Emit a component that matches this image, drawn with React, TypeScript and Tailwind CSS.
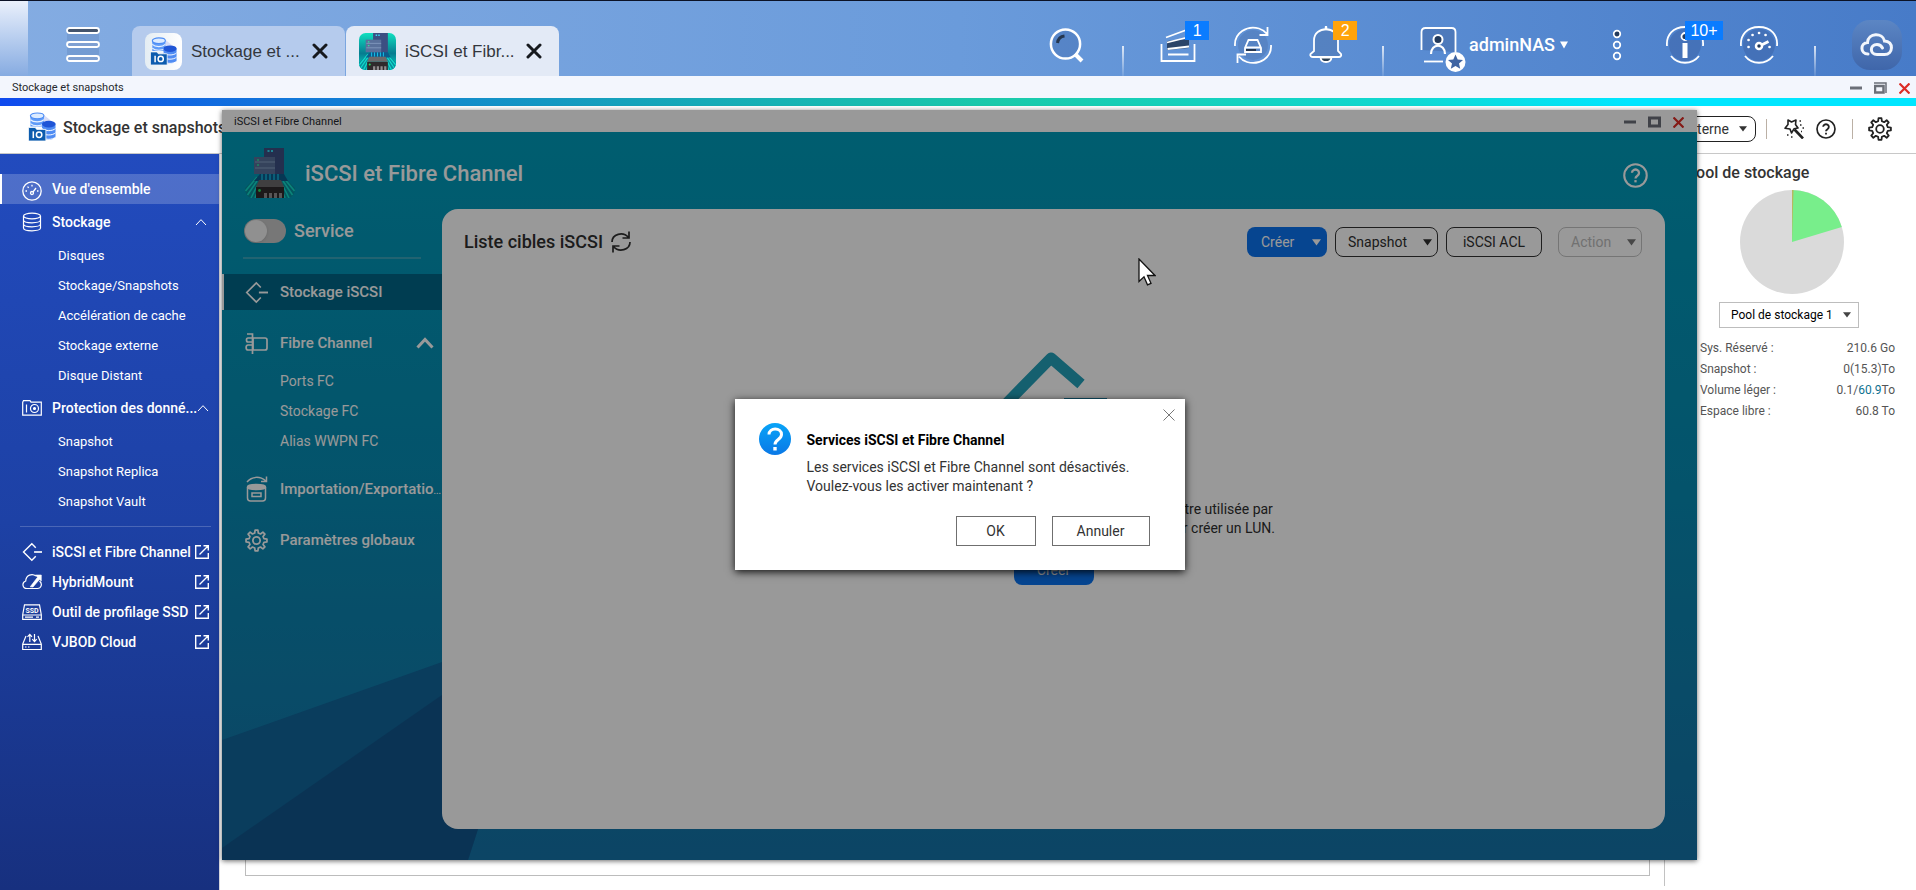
import type { ReactNode } from "react";
import { clsx } from "clsx";

// ── Navigation data ────────────────────────────────────────────────────────

const storageItems = ["Disques", "Stockage/Snapshots", "Accélération de cache", "Stockage externe", "Disque Distant"];
const protectionItems = ["Snapshot", "Snapshot Replica", "Snapshot Vault"];

const shortcuts = [
  { label: "iSCSI et Fibre Channel", icon: <TargetIcon className="size-5 shrink-0" /> },
  { label: "HybridMount", icon: <HybridIcon /> },
  { label: "Outil de profilage SSD", icon: <SsdIcon /> },
  { label: "VJBOD Cloud", icon: <VjbodIcon /> },
];

const poolRows: { label: string; value: ReactNode }[] = [
  { label: "Sys. Réservé :", value: "210.6 Go" },
  { label: "Snapshot :", value: "0(15.3)To" },
  { label: "Volume léger :", value: <>0.1/<a href="#volume" className="text-[#0f7291]">60.9</a>To</> },
  { label: "Espace libre :", value: "60.8 To" },
];

// ── Icons ──────────────────────────────────────────────────────────────────

function gearPath(teeth: number, outer: number, inner: number) {
  const pts: string[] = [];
  const step = (Math.PI * 2) / teeth;
  for (let i = 0; i < teeth; i++) {
    const a = i * step - Math.PI / 2;
    [[-0.3, inner], [-0.17, outer], [0.17, outer], [0.3, inner]].forEach(([k, r]) => {
      pts.push(`${(12 + r * Math.cos(a + k * step)).toFixed(2)} ${(12 + r * Math.sin(a + k * step)).toFixed(2)}`);
    });
  }
  return `M${pts.join("L")}Z`;
}

function GearIcon({ className }: { className?: string }) {
  return (
    <svg viewBox="0 0 24 24" fill="none" stroke="currentColor" strokeWidth="1.8" strokeLinejoin="round" className={className}>
      <path d={gearPath(8, 11, 8)} />
      <circle cx="12" cy="12" r="3.8" />
    </svg>
  );
}

function HelpIcon({ className }: { className?: string }) {
  return (
    <svg viewBox="0 0 24 24" fill="none" stroke="currentColor" strokeWidth="2" className={className}>
      <circle cx="12" cy="12" r="10.8" />
      <path d="M8.6 9.4a3.4 3.2 0 1 1 5.2 2.8c-1.2.8-1.8 1.3-1.8 2.6" strokeWidth="2.2" />
      <path d="M12 16.4v2.2" strokeWidth="2.2" />
    </svg>
  );
}

function Caret({ className }: { className?: string }) {
  return (
    <svg viewBox="0 0 8 6" fill="currentColor" preserveAspectRatio="none" className={clsx("shrink-0", className)}>
      <path d="M0 .3h8L4 5.6z" />
    </svg>
  );
}

function TargetIcon({ className }: { className?: string }) {
  return (
    <svg viewBox="0 0 24 24" fill="none" stroke="currentColor" strokeWidth="1.7" className={className}>
      <path d="M16.5 6.8 11.8 2 1.8 12l10 10 4.7-4.8" />
      <path d="M14.5 12H24" strokeWidth="2" />
    </svg>
  );
}

function GaugeIcon() {
  return (
    <svg viewBox="0 0 20 20" fill="none" stroke="currentColor" strokeWidth="1.3" className="mt-1 size-5 shrink-0">
      <circle cx="10" cy="10" r="9.2" />
      <circle cx="10" cy="12" r="1.5" />
      <path d="m11 11 3-4M3.5 10H5M15 10h1.5M10 3.7v1.8M5.5 5.6l1.2 1.2" />
    </svg>
  );
}

function DisksIcon() {
  return (
    <svg viewBox="0 0 20 20" fill="none" stroke="currentColor" strokeWidth="1.2" className="size-5 shrink-0">
      <ellipse cx="10" cy="4" rx="8.5" ry="2.8" />
      <path d="M1.5 4v12c0 1.6 3.8 2.8 8.5 2.8s8.5-1.2 8.5-2.8V4M1.5 8c0 1.6 3.8 2.8 8.5 2.8S18.5 9.6 18.5 8M1.5 12c0 1.6 3.8 2.8 8.5 2.8s8.5-1.2 8.5-2.8" />
    </svg>
  );
}

function CameraIcon() {
  return (
    <svg viewBox="0 0 20 20" fill="none" stroke="currentColor" strokeWidth="1.2" className="size-5 shrink-0">
      <path d="M.7 4.3 1.5 2.6H8l1 1.5h10.3v13H.7zM4.5 6.5v8" />
      <circle cx="12.5" cy="10.5" r="4" />
      <circle cx="12.5" cy="10.5" r="1" fill="currentColor" />
    </svg>
  );
}

function HybridIcon() {
  return (
    <svg viewBox="0 0 20 20" fill="none" stroke="currentColor" strokeWidth="1.2" className="size-5 shrink-0">
      <path d="M17.5 9c3.5 3 1.5 7.5-2 7.5H5C.3 16.5-.5 10.5 3.7 9 4 3 10 1 14 4" />
      <path d="M19.3 3v6l-1.800-1.600-6.500 7.600-2.800-.2 7.300-9.500L13.300 3z" fill="currentColor" strokeWidth=".6" />
    </svg>
  );
}

function SsdIcon() {
  return (
    <svg viewBox="0 0 20 20" fill="none" stroke="currentColor" strokeWidth="1.2" className="size-5 shrink-0">
      <path d="M2.5 2.8h15l1.800 9.900v4.600H.7v-4.600zM.7 13h18.600M14 15.200h3M3 15.200h8" />
      <text x="10" y="10.5" textAnchor="middle" fontSize="7" fontWeight="700" fill="currentColor" stroke="none">SSD</text>
    </svg>
  );
}

function VjbodIcon() {
  return (
    <svg viewBox="0 0 20 20" fill="none" stroke="currentColor" strokeWidth="1.2" className="size-5 shrink-0">
      <path d="M4 4 .7 12v5.500h18.600V12L16 4M.7 12.300h18.600M3 15h1.500M6 15h1.500" />
      <path d="M7.800 10V2.500M5.500 4.800l2.300-2.400L10 4.800M12.500 2v7.500M10.300 7.200l2.200 2.400 2.200-2.400" />
    </svg>
  );
}

function OpenIcon() {
  return (
    <svg viewBox="0 0 14 14" fill="none" stroke="currentColor" strokeWidth="1.4" className="size-3.5 shrink-0">
      <path d="M6 .7H.7v12.600h12.600V8M8.500.7h4.800v4.800M13 1 4.500 9.500" />
    </svg>
  );
}

function ChevronUp({ className, thick }: { className?: string; thick?: boolean }) {
  return (
    <svg viewBox="0 0 18 12" fill="none" stroke="currentColor" strokeWidth={thick ? 3 : 1.5} className={clsx("shrink-0", className)}>
      <path d="m1.500 10.500 7.500-8 7.500 8" />
    </svg>
  );
}

function StorageLogo({ className }: { className?: string }) {
  return (
    <svg viewBox="0 0 28 30" className={className}>
      <path d="M16 3 27 12v4H15z" fill="#d7dcf6" />
      <path d="M2 4v11h14V4z" fill="#5f9bf8" />
      <path d="M2 8c3 3 11 3 14 0M2 12c3 3 11 3 14 0" fill="none" stroke="#e9f2ff" strokeWidth="1.2" />
      <ellipse cx="9" cy="4" rx="7" ry="3" fill="#dcebff" stroke="#4d8df5" strokeWidth="1.2" />
      <path d="M14 12v14c3 3.500 10 3.500 14 0V12z" fill="#4f8cf3" />
      <path d="M14 17c3 3 11 3 14 0M14 21.500c3 3 11 3 14 0M14 26c3 3 11 3 14 0" fill="none" stroke="#fff" strokeWidth="1" />
      <ellipse cx="21" cy="12.5" rx="7" ry="3.5" fill="#1f55d6" />
      <path d="M0 16h7l1.500 2H18v12H0z" fill="#0c5cae" stroke="#fff" strokeWidth=".8" />
      <path d="M5 20v7" stroke="#fff" strokeWidth="1.6" />
      <circle cx="11" cy="23.5" r="2.8" fill="none" stroke="#fff" strokeWidth="1.6" />
    </svg>
  );
}

function IscsiLogo({ className, filled }: { className?: string; filled?: boolean }) {
  return (
    <svg viewBox="0 0 50 50" className={className}>
      {filled && (
        <>
          <defs>
            <linearGradient id="tile" x1="0" y1="0" x2="0" y2="1">
              <stop offset="0" stopColor="#0fe0c0" />
              <stop offset=".55" stopColor="#067c90" />
              <stop offset="1" stopColor="#05e0c8" />
            </linearGradient>
          </defs>
          <rect width="50" height="50" rx="9" fill="url(#tile)" />
        </>
      )}
      <path d="M12 28 0 40c0 6 3 10 8 10h5zM38 28l12 12c0 6-3 10-8 10h-5z" fill="#078f9d" />
      <path d="M12 29 .5 43M12 33 2.500 47M12 38 6 50M13 42l-3 8M38 29l11.500 14M38 33l9.500 14M38 38l6 12M37 42l3 8" stroke="#12dccb" strokeWidth="1.6" />
      <path d="M19 0h20v27H19z" fill="#3c4f82" />
      <path d="M22.500 3h2M26 3h2" stroke="#35dcf5" strokeWidth="2" />
      <path d="M15 26h24l4 7H9z" fill="#0b5c8c" />
      <path d="M17 26v6M21 26v6M25 26v6M29 26v6M33 26v6" stroke="#16c8f0" strokeWidth="1.2" />
      <path d="M9 9h21v17H9z" fill="#59709a" />
      <path d="M10 14h20M10 20h20" stroke="#8aa2c6" />
      <path d="M12 12h2M12 17h2" stroke="#35e0a0" strokeWidth="1.5" />
      <path d="M14 32h22l3 7H11z" fill="#6c6a6c" />
      <path d="M11 39h28v11H11z" fill="#2f2a2c" />
      <path d="M19 45h3v5h-3zM24 45h3v5h-3zM29 45h3v5h-3zM34 45h3v5h-3z" fill="#928e90" />
      <circle cx="14.5" cy="42.5" r="1.4" fill="#29e060" />
    </svg>
  );
}

// ── Desktop top bar ────────────────────────────────────────────────────────

function TaskTab({ icon, label, active }: { icon: ReactNode; label: string; active?: boolean }) {
  return (
    <div
      className={clsx(
        "flex h-[50px] w-[213px] items-center rounded-t-lg pl-[13px] pr-[17px] font-['Liberation_Sans',Arial,sans-serif]",
        active ? "bg-[#e3eaf6]" : "bg-[#b5cbed]"
      )}
    >
      {icon}
      <span className="ml-[9px] flex-1 whitespace-nowrap pt-0.5 text-[17px] text-[#33373d]">{label}</span>
      <button aria-label="Fermer" className="text-[#16191e]">
        <svg viewBox="0 0 16 16" stroke="currentColor" strokeWidth="3" strokeLinecap="round" className="size-4">
          <path d="m2 2 12 12M14 2 2 14" />
        </svg>
      </button>
    </div>
  );
}

function Badge({ children, orange }: { children: ReactNode; orange?: boolean }) {
  return (
    <span
      className={clsx(
        "absolute -top-[5px] flex h-[19px] items-center justify-center text-base text-white font-['Liberation_Sans',Arial,sans-serif]",
        orange ? "bg-[#ffa30a]" : "bg-[#0a7cff]",
        children === "10+" ? "left-[19px] w-[38px]" : "left-[25px] w-6"
      )}
    >
      {children}
    </span>
  );
}

function TopButton({ label, children, badge }: { label: string; children: ReactNode; badge?: ReactNode }) {
  return (
    <button aria-label={label} className="relative size-[38px] shrink-0">
      <svg viewBox="0 0 38 38" fill="none" stroke="#fff" strokeWidth="1.8" className="size-[38px]">
        {children}
      </svg>
      {badge}
    </button>
  );
}

function TopDivider() {
  return <span className="h-[30px] w-0.5 shrink-0 self-end bg-linear-to-b from-white/80 to-white/10" />;
}

function TopBar() {
  return (
    <header className="flex h-[76px] shrink-0 items-center border-t border-[#0b1226] bg-linear-to-r from-[#84ace2] via-[#6a9bdb] to-[#477bc8]">
      <span className="h-full w-7 bg-linear-to-b from-[#eaf0fb] to-[#86abe1]" />
      <button aria-label="Menu principal" className="ml-[38px] mt-3">
        <svg viewBox="0 0 34 36" fill="none" stroke="#fff" strokeWidth="1.8" className="h-9 w-[34px]">
          <path d="M1 4h32v28H1z" fill="#5b80b8" fillOpacity=".35" stroke="none" />
          <rect x="1" y="1" width="32" height="5" rx="2.5" fill="#44546c" />
          <rect x="1" y="15" width="32" height="5" rx="2.5" fill="#7fa0d2" />
          <rect x="1" y="29" width="32" height="5" rx="2.5" fill="#7fa0d2" />
        </svg>
      </button>
      <div className="ml-8 flex self-end gap-px">
        <TaskTab
          label="Stockage et ..."
          icon={
            <span className="flex size-[37px] shrink-0 items-center justify-center rounded-lg bg-linear-to-r from-[#e4edf3] to-white">
              <StorageLogo className="h-7 w-[27px]" />
            </span>
          }
        />
        <TaskTab active label="iSCSI et Fibr..." icon={<IscsiLogo filled className="size-[37px] shrink-0" />} />
      </div>

      <div className="ml-auto flex h-full items-center gap-9 pt-[13px] pr-3.5">
        <TopButton label="Rechercher">
          <circle cx="17.5" cy="18" r="14.6" fill="#3a62a6" fillOpacity=".35" strokeWidth="2.5" />
          <path d="m27 28 7 7" strokeWidth="4" />
          <path d="M9.500 17c.5-4 3-6.500 7-7" stroke="#25364f" strokeWidth="3" />
        </TopButton>
        <TopDivider />
        <TopButton label="Tâches en arrière-plan" badge={<Badge>1</Badge>}>
          <path d="M7 15v9l22-2v-9z" fill="#2c4568" stroke="none" />
          <path d="M1.500 18v17h33V18M8 28.500h20.500M7.500 23 29 20.500M7 16.500 29 11M6 11.500 29 3" />
        </TopButton>
        <TopButton label="Périphérique externe">
          <circle cx="19" cy="19" r="15" fill="#4a6ea6" fillOpacity=".35" stroke="none" />
          <path d="M1 20C0 7 13-1 25 2.500c3.500 1 6 3 8 5.500M33.500 1v8h-8M37 19c1 13-12 20.500-24 17-3.500-1-6-3-8-5.500M3.500 37v-8.500H12M14.500 14h9l3.500 8v4H11v-4zM11 21.500h16" />
          <path d="M12 24h10" stroke="#25364f" strokeWidth="2" />
        </TopButton>
        <TopButton label="Notifications" badge={<Badge orange>2</Badge>}>
          <path d="M6 25V14.500c0-15 24-15 24 0V25l3 3c1 2-1 3-2 3H5c-1.500 0-3.500-1-2.500-3z" fill="#4a6ea6" fillOpacity=".4" />
          <path d="M12.500 31.500h11c-.5 6-10.500 6-11 0z" fill="#2c4055" />
          <path d="M18 3V1" strokeWidth="2.5" strokeLinecap="round" />
        </TopButton>
        <TopDivider />
        <button className="flex items-center text-white">
          <svg viewBox="0 0 46 46" fill="none" stroke="#fff" strokeWidth="1.8" className="-mb-2 size-[46px]">
            <path d="M1.500 24V6c0-3 1.500-4 4-4h26c2.500 0 4 1 4 4v20" fill="#41629c" fillOpacity=".4" />
            <path d="M4 35.500h19" />
            <circle cx="18" cy="13.5" r="4.5" fill="#233a5c" strokeWidth="2" />
            <path d="M11 28c0-11 14-11 14 0" strokeWidth="2.2" />
            <circle cx="35.5" cy="36" r="10" fill="#fff" stroke="none" />
            <path d="m35.500 28.500 2.200 5 5.300.5-4 3.500 1.200 5.300-4.700-2.800-4.700 2.800 1.200-5.300-4-3.500 5.300-.5z" fill="#3f64a2" stroke="none" />
          </svg>
          <span className="ml-[3px] text-lg font-medium">adminNAS</span>
          <Caret className="ml-[5px] h-2 w-2" />
        </button>
        <button aria-label="Plus d'options" className="flex w-[26px] justify-center">
          <svg viewBox="0 0 10 32" fill="none" stroke="#fff" strokeWidth="1.7" className="h-8 w-2.5">
            <circle cx="5" cy="5" r="3.3" fill="#233a5c" />
            <circle cx="5" cy="16" r="3.3" />
            <circle cx="5" cy="27" r="3.3" />
          </svg>
        </button>
        <TopButton label="Informations" badge={<Badge>10+</Badge>}>
          <circle cx="19" cy="19" r="16" fill="#375a9a" fillOpacity=".4" stroke="none" />
          <path d="M1 20C0 9 7 1 19 1s19 8 18 19M5 30c7 9 21 9 28 0" />
          <circle cx="19" cy="10.5" r="3.5" fill="#233a5c" />
          <path d="M16.500 17h5v15h-5z" fill="#fff" stroke="none" />
        </TopButton>
        <TopButton label="Tableau de bord">
          <circle cx="19" cy="19" r="16" fill="#375a9a" fillOpacity=".4" stroke="none" />
          <path d="M1 20C0 9 7 1 19 1s19 8 18 19M5 30c7 9 21 9 28 0" />
          <circle cx="19" cy="20" r="3" fill="#233a5c" strokeWidth="2.5" />
          <path d="m21.500 19 7-3.500" strokeWidth="3" />
          <path d="M19 7h.1M12.500 9h.1M25.500 9h.1M8.500 14h.1M8.500 21h.1M29.500 21h.1" strokeWidth="2.6" strokeLinecap="round" />
        </TopButton>
        <TopDivider />
        <button aria-label="myQNAPcloud" className="flex size-[50px] shrink-0 items-center justify-center rounded-[18px] bg-linear-to-b from-[#5c86c4] to-[#3f66aa]">
          <svg viewBox="0 0 34 26" fill="none" stroke="#f2f6fc" strokeWidth="3" strokeLinecap="round" className="h-[26px] w-[34px]">
            <path d="M8 22C0 22 0 11 7.500 10.500 8 .5 23 .5 24.500 9c9.500 0 9 13.500 0 13.500H17c-7.500 0-7.500-10 0-10 3 0 4.500 1.500 5.500 3.500" />
          </svg>
        </button>
      </div>
    </header>
  );
}

// ── Window chrome ──────────────────────────────────────────────────────────

function WindowBar({ title, stacked, className }: { title: string; stacked?: boolean; className?: string }) {
  return (
    <div className={clsx("flex h-[22px] shrink-0 items-center pt-0.5 text-[11px] text-[#26292e]", className)}>
      <span>{title}</span>
      <div className="ml-auto flex items-center gap-3 text-[#6b6f78]">
        <button aria-label="Réduire">
          <svg viewBox="0 0 12 12" className="size-3"><path d="M0 4.500h12v3H0z" fill="currentColor" /></svg>
        </button>
        <button aria-label="Agrandir">
          <svg viewBox="0 0 13 12" fill="none" stroke="currentColor" className="h-3 w-[13px]">
            {stacked ? (
              <>
                <path d="M0 1h12v10" strokeWidth="1.5" />
                <path d="M1 4h8.500v6.500H1z" strokeWidth="2.5" />
              </>
            ) : (
              <path d="M1.500 2h10v8h-10z" strokeWidth="3" />
            )}
          </svg>
        </button>
        <button aria-label="Fermer" className="text-[#dc2c26]">
          <svg viewBox="0 0 11 11" stroke="currentColor" strokeWidth="2.2" className="size-[11px]"><path d="m.5.5 10 10M10.500.5l-10 10" /></svg>
        </button>
      </div>
    </div>
  );
}

// ── Storage application ────────────────────────────────────────────────────

function SideGroup({ icon, label, items }: { icon: ReactNode; label: string; items: string[] }) {
  return (
    <div>
      <button className="flex h-9 w-full items-center pl-[22px] pr-3 text-sm font-medium">
        {icon}
        <span className="ml-2.5 whitespace-nowrap">{label}</span>
        <ChevronUp className="ml-auto h-2 w-3" />
      </button>
      {items.map(item => (
        <a key={item} href="#storage" className="flex h-[30px] items-center pt-0.5 pl-[58px] text-[13px]">{item}</a>
      ))}
    </div>
  );
}

function StorageSidebar() {
  return (
    <nav className="w-[219px] shrink-0 bg-linear-to-b from-[#224bbe] via-[#1d41a5] to-[#17307f] pt-5 text-white">
      <a href="#overview" className="flex h-[30px] items-center border-l-2 border-white bg-white/20 pl-5 text-sm font-medium">
        <GaugeIcon />
        <span className="ml-2.5">Vue d'ensemble</span>
      </a>
      <SideGroup icon={<DisksIcon />} label="Stockage" items={storageItems} />
      <SideGroup icon={<CameraIcon />} label="Protection des donné..." items={protectionItems} />
      <hr className="mt-2.5 mb-2.5 ml-5 mr-2 border-white/20" />
      {shortcuts.map(({ label, icon }) => (
        <a key={label} href="#app" className="flex h-[30px] items-center justify-between pl-[22px] pr-2.5 text-sm font-medium">
          <span className="flex items-center gap-2.5 whitespace-nowrap">{icon}{label}</span>
          <OpenIcon />
        </a>
      ))}
    </nav>
  );
}

function PoolPanel() {
  return (
    <aside className="mb-1 w-[252px] shrink-0 border-l border-[#c2c2c2] pr-[21px]">
      <h2 className="flex h-9 items-center pt-0.5 pl-[21px] text-[16px] font-medium text-[#333]">Pool de stockage</h2>
      <svg viewBox="0 0 104 104" className="ml-[75px] size-[104px]">
        <circle cx="52" cy="52" r="52" fill="#dadada" />
        <path d="M52 52V0a52 52 0 0 1 49.800 37z" fill="#78ee8b" />
        <path d="M52 52V0h1.500z" fill="#b8b860" />
      </svg>
      <div className="relative mt-2 ml-[54px] w-[140px]">
        <select aria-label="Pool de stockage" className="h-[26px] w-full appearance-none border border-[#bdbdbd] bg-white pl-[11px] text-xs text-black">
          <option>Pool de stockage 1</option>
        </select>
        <Caret className="pointer-events-none absolute right-2 top-[10px] h-1.5 w-2 text-[#444]" />
      </div>
      <dl className="mt-[9px] pl-[35px] text-xs text-[#555]">
        {poolRows.map(row => (
          <div key={row.label} className="flex h-[21px] items-center justify-between">
            <dt>{row.label}</dt>
            <dd>{row.value}</dd>
          </div>
        ))}
      </dl>
    </aside>
  );
}

function StorageApp() {
  return (
    <section className="flex min-h-0 flex-1 flex-col bg-white">
      <WindowBar stacked title="Stockage et snapshots" className="bg-[#f3f6fd] pl-3 pr-1.5" />
      <div className="h-2 shrink-0 bg-[linear-gradient(90deg,#0f4aee_0%,#1177da_15%,#15a3bb_33%,#1acaaa_52%,#10d8d0_73%,#00e6ff_85%)]" />
      <header className="flex h-12 shrink-0 items-center border-b border-[#c8c8c8] pl-7 pr-6 pb-0.5 text-[#222]">
        <StorageLogo className="mb-1 h-[29px] w-7" />
        <h1 className="mb-0.5 ml-[7px] text-[16px] font-medium text-[#333]">Stockage et snapshots</h1>
        <button className="ml-auto flex h-[26px] items-center rounded-lg border border-[#222] px-2 text-sm text-[#333]">
          Périphérique de stockage externe
          <Caret className="ml-2.5 h-1.5 w-2" />
        </button>
        <span className="ml-2.5 h-5 w-px bg-[#bbb0a5]" />
        <button aria-label="Assistant" className="ml-[17px]">
          <svg viewBox="0 0 20 20" fill="none" stroke="currentColor" strokeWidth="1.6" className="size-5">
            <path d="m4 1 3.500 2L12 1l-.5 4.500L14 9l-4 .8L7.500 14 6 10l-5-.8 3-3.700z" strokeLinejoin="round" />
            <path d="m10.500 10.500 8.500 9" strokeWidth="2.6" />
            <path d="M15.500 2h1.500M16 6h1.500M3 16h1.500M7 18h1.500M18.500 9h1.500M17 12.500h1" />
          </svg>
        </button>
        <button aria-label="Aide" className="ml-3"><HelpIcon className="size-5" /></button>
        <span className="ml-4 h-5 w-px bg-[#bbb0a5]" />
        <button aria-label="Paramètres" className="ml-[15px]"><GearIcon className="size-6" /></button>
      </header>
      <div className="flex min-h-0 flex-1">
        <StorageSidebar />
        <main className="flex flex-1 border-l border-[#d5d5dc] pt-5 pr-3.5 pb-3.5 pl-[25px]">
          <div className="flex-1 border border-[#bcbcbc]" />
        </main>
        <PoolPanel />
      </div>
    </section>
  );
}

// ── iSCSI window ───────────────────────────────────────────────────────────

function MenuRow({ icon, label, active, children }: { icon: ReactNode; label: ReactNode; active?: boolean; children?: ReactNode }) {
  return (
    <a
      href="#iscsi"
      className={clsx(
        "flex h-9 items-center border-l-2 pl-[21px] text-[15px] font-medium whitespace-nowrap",
        active ? "border-white bg-[#006788]" : "border-transparent"
      )}
    >
      {icon}
      <span className="ml-3">{label}</span>
      {children}
    </a>
  );
}

function IscsiMenu() {
  return (
    <nav className="w-[220px] shrink-0 text-white">
      <label className="relative ml-[22px] mt-2.5 flex h-6 items-center gap-2 text-lg font-medium">
        <input type="checkbox" role="switch" className="sr-only" />
        <span className="flex h-6 w-[42px] items-center rounded-full bg-[#c6c6c6] px-px">
          <span className="size-[22px] rounded-full bg-[#f0f0f0] shadow" />
        </span>
        Service
      </label>
      <hr className="mt-3.5 mb-[15px] ml-[21px] mr-[21px] border-t-2 border-[#3aa5bd]" />
      <MenuRow active label="Stockage iSCSI" icon={<TargetIcon className="size-[23px]" />} />
      <div className="mt-[15px]">
        <MenuRow
          label="Fibre Channel"
          icon={
            <svg viewBox="0 0 23 23" fill="none" stroke="currentColor" strokeWidth="1.7" className="size-[23px]">
              <path d="M8 6h12c1 0 2 1 2 2v8c0 1-1 2-2 2H8z" />
              <path d="M2 2h5.500v20M7.500 6H3c-2 0-2 4 0 4h4.500M7.500 13H3c-2.500 0-2.500 5 0 5h4.500M8 10H5" />
            </svg>
          }
        >
          <ChevronUp thick className="ml-auto mr-2 h-3 w-[18px]" />
        </MenuRow>
      </div>
      <div className="mt-[5px] mb-[15px] text-sm">
        {["Ports FC", "Stockage FC", "Alias WWPN FC"].map(item => (
          <a key={item} href="#fc" className="flex h-[30px] items-center pl-[58px]">{item}</a>
        ))}
      </div>
      <MenuRow
        label={<>Importation/Exportatio<span className="text-[9px]">...</span></>}
        icon={
          <svg viewBox="0 0 23 26" fill="none" stroke="currentColor" strokeWidth="1.5" className="h-[26px] w-[23px] shrink-0">
            <path d="M2 6c5-6 13-6 19-1M21.500.5V5.500H16" />
            <ellipse cx="11.5" cy="11" rx="9" ry="2.5" fill="currentColor" />
            <path d="M2.500 11v11c0 2 1 3 3 3h12c2 0 3-1 3-3V11M7 17h9v3.500H7z" />
          </svg>
        }
      />
      <div className="mt-[15px]">
        <MenuRow label="Paramètres globaux" icon={<GearIcon className="size-[23px]" />} />
      </div>
    </nav>
  );
}

const outlineButton = "flex h-[30px] items-center rounded-lg border border-[#333]";

function TargetList() {
  return (
    <main className="flex flex-1 flex-col rounded-2xl bg-white text-sm text-[#2f2f2f]">
      <div className="flex items-center pt-[18px] pl-[22px] pr-[23px]">
        <h2 className="text-lg font-medium">Liste cibles iSCSI</h2>
        <button aria-label="Actualiser" className="ml-2">
          <svg viewBox="0 0 20 22" fill="none" stroke="currentColor" strokeWidth="1.7" className="h-[22px] w-5">
            <path d="M1 11c0-8 11-11 16.500-4.500M18 .5v6.500h-6.500M19 11c0 8-11 11-16.500 4.500M2 21.500V15h6.500" />
          </svg>
        </button>
        <button className="ml-auto flex h-[30px] w-20 items-center justify-between rounded-lg bg-[#0a73f0] pl-3.5 pr-1.5 text-white">
          Créer <Caret className="h-[7px] w-[9px]" />
        </button>
        <button className={clsx(outlineButton, "ml-2 w-[103px] justify-between pl-3 pr-[5px]")}>
          Snapshot <Caret className="h-[7px] w-[9px]" />
        </button>
        <button className={clsx(outlineButton, "ml-2 w-24 justify-center")}>iSCSI ACL</button>
        <button disabled className="ml-4 flex h-[30px] w-[84px] items-center justify-between rounded-lg border border-[#c4c4c4] pl-3 pr-[5px] text-[#bcbcbc]">
          Action <Caret className="h-[7px] w-[9px] text-[#777]" />
        </button>
      </div>

      <div className="flex flex-col items-center pt-[95px] text-center">
        <svg viewBox="0 0 112 112" fill="none" stroke="#23a0b9" strokeWidth="11" strokeLinejoin="round" className="size-28">
          <path d="M83 32 53 6 4 56l49 50 30-30" />
          <path d="M66 51.500h43" stroke="#1a86ae" />
        </svg>
        <p className="mt-9 leading-[19px]">
          Cette cible iSCSI est une unité de stockage qui pourrait être utilisée par
          <br />
          un initiateur. Cliquez sur le bouton ‘Créer’ ci-dessous pour créer un LUN.
        </p>
        <button className="mt-[17px] h-[30px] w-20 rounded-lg bg-[#0a73f0] text-white">Créer</button>
      </div>
    </main>
  );
}

function ActivateDialog() {
  return (
    <div className="absolute inset-0 flex items-center justify-center bg-black/40 pb-0.5">
      <div role="dialog" aria-labelledby="dialog-title" className="relative flex h-[171px] w-[450px] bg-white pt-6 pl-6 pr-[35px] text-sm text-[#333] shadow-[0_2px_8px_rgba(0,0,0,0.9)]">
        <button aria-label="Fermer" className="absolute right-2.5 top-2.5 text-[#777]">
          <svg viewBox="0 0 12 12" stroke="currentColor" className="size-3"><path d="m.5.5 11 11M11.500.5l-11 11" /></svg>
        </button>
        <svg viewBox="0 0 32 32" fill="none" className="size-8 shrink-0">
          <defs>
            <linearGradient id="ask" x1="0" y1="0" x2="0" y2="1">
              <stop offset="0" stopColor="#08a4f8" />
              <stop offset="1" stopColor="#0a78e6" />
            </linearGradient>
          </defs>
          <circle cx="16" cy="16" r="16" fill="url(#ask)" />
          <path d="M10 11.500c0-7.500 12.500-7 12.500 0 0 5-6.500 5-6.500 10" stroke="#fff" strokeWidth="3" />
          <path d="M16 24v3.500" stroke="#fff" strokeWidth="3.4" />
        </svg>
        <div className="ml-4 flex flex-1 flex-col">
          <h3 id="dialog-title" className="mt-[7px] font-bold leading-5 text-black">Services iSCSI et Fibre Channel</h3>
          <p className="mt-2 whitespace-nowrap leading-[19px]">
            Les services iSCSI et Fibre Channel sont désactivés.
            <br />
            Voulez-vous les activer maintenant ?
          </p>
          <div className="mt-5 flex justify-end gap-4">
            <button className="h-[30px] w-20 border border-[#6f6f6f]">OK</button>
            <button className="h-[30px] w-[98px] border border-[#6f6f6f]">Annuler</button>
          </div>
        </div>
      </div>
    </div>
  );
}

function IscsiWindow() {
  return (
    <section className="absolute top-[110px] right-[219px] bottom-[30px] left-[222px] flex flex-col bg-linear-to-b from-[#009dbb] via-[#078bb3] to-[#1473a8] shadow-[0_1px_5px_rgba(0,0,0,0.6)]">
      <WindowBar title="iSCSI et Fibre Channel" className="relative bg-white pl-3 pr-[13px]" />
      {/* Wallpaper facets in the lower left corner */}
      <svg viewBox="0 0 312 204" className="absolute bottom-0 left-0 h-[204px] w-[312px]">
        <path d="M0 84 237 0h75l-66 204H0z" fill="#11669b" />
        <path d="M0 192 276 0h36l-66 204H0z" fill="#12568c" />
      </svg>
      <header className="relative flex h-[77px] shrink-0 items-center pl-[23px] pr-[49px] pb-1 text-white">
        <IscsiLogo className="mt-2 size-[50px]" />
        <h1 className="ml-2.5 mt-2.5 text-[22px] font-medium">iSCSI et Fibre Channel</h1>
        <button aria-label="Aide" className="ml-auto mt-3.5"><HelpIcon className="size-[25px]" /></button>
      </header>
      <div className="relative flex min-h-0 flex-1 pr-8 pb-[31px]">
        <IscsiMenu />
        <TargetList />
      </div>
      <ActivateDialog />
    </section>
  );
}

export default function App() {
  return (
    <div className="relative flex h-screen min-h-[700px] flex-col overflow-hidden font-[Roboto,sans-serif]">
      <TopBar />
      <StorageApp />
      <IscsiWindow />
      {/* Mouse pointer */}
      <svg viewBox="0 0 18 28" className="pointer-events-none absolute top-[258px] left-[1138px] h-7 w-[18px]">
        <path d="M1 1v22.500l5-4.700 3.500 8 3.500-1.500-3.500-7.800H17z" fill="#fff" stroke="#111" strokeWidth="1.3" />
      </svg>
    </div>
  );
}
